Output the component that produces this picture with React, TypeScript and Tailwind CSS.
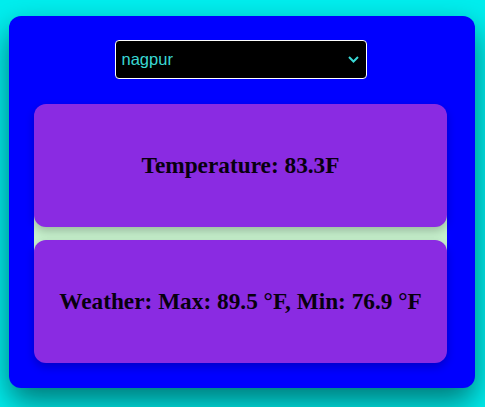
import { useState } from "react";

const cities: Record<string, { temp: string; max: string; min: string }> = {
  nagpur: { temp: "83.3", max: "89.5", min: "76.9" },
  mumbai: { temp: "86.1", max: "88.0", min: "80.2" },
  delhi: { temp: "91.4", max: "97.3", min: "82.6" },
};

export default function App() {
  const [city, setCity] = useState("nagpur");
  const data = cities[city];

  return (
    <div className="min-h-screen bg-[#00eeee] pt-4 font-['Liberation_Serif',serif]">
      <div className="ml-[9px] w-[466px] rounded-xl bg-[#0000ff] pt-6 pb-[25px] pl-[25px] pr-[28px] shadow-[0_14px_30px_rgba(0,0,0,0.5)]">
        {/* city picker */}
        <div className="relative mx-auto mb-[25px] w-[252px]">
          <select
            value={city}
            onChange={(e) => setCity(e.target.value)}
            className="h-[39px] w-full appearance-none rounded-[4px] border border-white bg-black pl-[6px] font-['Liberation_Sans',Arial,sans-serif] text-[16.5px] text-[#3ad8d4] outline-none"
          >
            {Object.keys(cities).map((c) => (
              <option key={c} value={c}>
                {c}
              </option>
            ))}
          </select>
          <svg
            className="pointer-events-none absolute top-[16px] right-[8px] h-[7px] w-[11px]"
            viewBox="0 0 11 7"
            fill="none"
            stroke="#3ad8d4"
            strokeWidth="2"
          >
            <path d="M1 1l4.5 4.5L10 1" />
          </svg>
        </div>

        {/* weather cards */}
        <div className="flex flex-col gap-[13px] bg-[linear-gradient(to_bottom,transparent_108px,#c6f0cc_108px,#c6f0cc_151px,transparent_151px)]">
          <div className="flex h-[123px] items-center justify-center rounded-xl bg-[#8a2be2] shadow-[0_4px_10px_rgba(0,0,0,0.22)]">
            <h2 className="text-[23.3px] font-bold text-[#08000f]">
              Temperature: {data.temp}F
            </h2>
          </div>
          <div className="flex h-[123px] items-center justify-center rounded-xl bg-[#8a2be2] shadow-[0_4px_10px_rgba(0,0,0,0.22)]">
            <h2 className="text-[23.3px] font-bold text-[#08000f]">
              Weather: Max: {data.max} °F, Min: {data.min} °F
            </h2>
          </div>
        </div>
      </div>
    </div>
  );
}
